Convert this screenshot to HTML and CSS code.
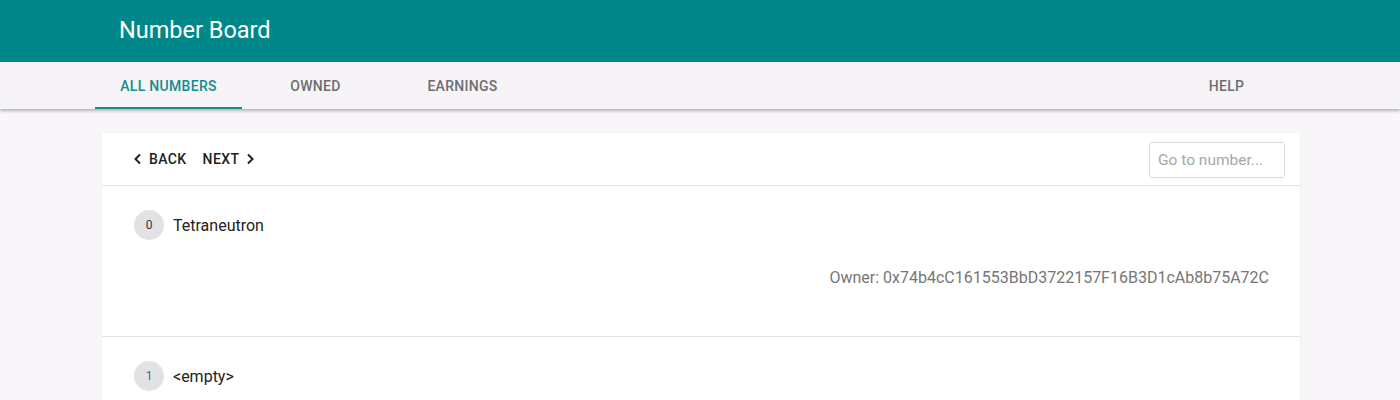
FILE: index.html
```html
<!DOCTYPE html>
<html>
<head>
<meta charset="utf-8">
<link rel="stylesheet" href="styles.css">
</head>
<body>
<header class="appbar">
  <div class="appbar-title">Number Board</div>
</header>
<nav class="tabbar">
  <div class="tabs">
    <div class="tab active">All Numbers</div>
    <div class="tab">Owned</div>
    <div class="tab">Earnings</div>
    <div class="spacer"></div>
    <div class="tab">Help</div>
  </div>
</nav>
<main class="content">
  <section class="card">
    <div class="toolbar">
      <div class="pager">
        <button class="pbtn back"><svg width="10" height="12" viewBox="0 0 10 12"><path d="M7 1.5 L2.5 6 L7 10.5" fill="none" stroke="#222" stroke-width="2"/></svg>Back</button>
        <button class="pbtn next">Next<svg width="10" height="12" viewBox="0 0 10 12"><path d="M3 1.5 L7.5 6 L3 10.5" fill="none" stroke="#222" stroke-width="2"/></svg></button>
      </div>
      <input class="goto" type="text" placeholder="Go to number...">
    </div>
    <div class="item">
      <div class="item-head">
        <span class="avatar">0</span>
        <span class="name">Tetraneutron</span>
      </div>
      <div class="owner">Owner: 0x74b4cC161553BbD3722157F16B3D1cAb8b75A72C</div>
    </div>
    <div class="item">
      <div class="item-head">
        <span class="avatar blue">1</span>
        <span class="name">&lt;empty&gt;</span>
      </div>
    </div>
  </section>
</main>
</body>
</html>
```

FILE: styles.css
```css
* { box-sizing: border-box; }
html, body { margin: 0; padding: 0; }
body {
  font-family: Roboto, "Liberation Sans", sans-serif;
  background: #f8f6f9;
  color: #222;
  height: 400px;
  overflow: hidden;
}
.appbar {
  background: #008789;
  height: 62px;
  display: flex;
  align-items: center;
  padding-left: 119px;
}
.appbar-title {
  color: #fff;
  font-size: 23.5px;
  font-weight: 400;
  padding-bottom: 2px;
}
.tabbar {
  background: #f6f4f7;
  height: 47px;
  box-shadow: 0 2px 3px rgba(0,0,0,0.28);
  position: relative;
  z-index: 1;
}
.tabs {
  display: flex;
  margin-left: 95px;
  width: 1205px;
  height: 47px;
}
.tab {
  width: 147px;
  display: flex;
  align-items: center;
  justify-content: center;
  font-size: 14px;
  font-weight: 500;
  text-transform: uppercase;
  color: #6e6e70;
  letter-spacing: 0.3px;
  padding-top: 2px;
  border-bottom: 2px solid transparent;
}
.tab.active {
  color: #128d8e;
  border-bottom-color: #128d8e;
}
.spacer { flex: 1; }
.content {
  padding: 24px 100px 0 102px;
}
.card {
  background: #fff;
  box-shadow: 0 1px 2px rgba(0,0,0,0.06);
}
.toolbar {
  height: 53px;
  display: flex;
  align-items: center;
  justify-content: space-between;
  padding: 0 15px 0 31px;
  border-bottom: 1px solid #e3e3e3;
}
.pager { display: flex; align-items: center; gap: 16px; }
.pbtn {
  background: none;
  border: none;
  padding: 0;
  font-family: Roboto, "Liberation Sans", sans-serif;
  font-size: 14px;
  font-weight: 500;
  color: #1e1e1e;
  text-transform: uppercase;
  letter-spacing: 0.4px;
  display: flex;
  align-items: center;
  gap: 6px;
}
.goto {
  width: 136px;
  height: 36px;
  border: 1px solid #dcdcdc;
  border-radius: 3px;
  padding: 0 8px;
  font-family: Roboto, "Liberation Sans", sans-serif;
  font-size: 15.5px;
  color: #333;
  margin-top: 1px;
}
.goto::placeholder { color: #a8a8a8; }
.item {
  height: 151px;
  border-bottom: 1px solid #e3e3e3;
  padding: 24px 31px 0 32px;
}
.item-head { display: flex; align-items: center; gap: 9px; }
.avatar {
  width: 30px;
  height: 30px;
  border-radius: 50%;
  background: #e2e1e3;
  display: flex;
  align-items: center;
  justify-content: center;
  font-size: 12px;
  color: #333;
}
.avatar.blue { color: #3a6a9a; }
.name { font-size: 16px; color: #222; }
.owner {
  text-align: right;
  font-size: 16px;
  color: #767676;
  margin-top: 28px;
}
```
